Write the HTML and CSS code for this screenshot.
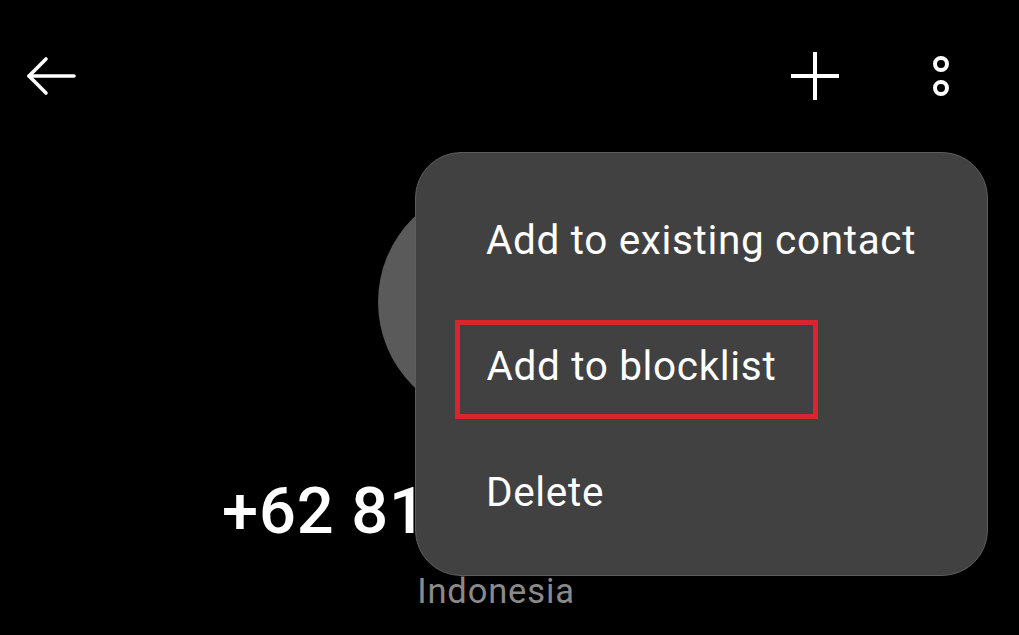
FILE: index.html
```html
<!DOCTYPE html>
<html lang="en">
<head>
<meta charset="utf-8">
<title>Contact</title>
<link rel="stylesheet" href="styles.css">
</head>
<body>
<div class="screen">
  <header class="topbar">
    <svg class="icon-back" width="50" height="40" viewBox="0 0 50 40" fill="none" stroke="#fff" stroke-width="3.6" stroke-linecap="round" stroke-linejoin="round"><path d="M48 20H3"/><path d="M20 3L3 20l17 17"/></svg>
    <div class="actions">
      <svg class="icon-plus" width="50" height="50" viewBox="0 0 50 50" fill="none" stroke="#fff" stroke-width="4"><path d="M1 25h48"/><path d="M25 1v48"/></svg>
      <svg class="icon-more" width="18" height="40" viewBox="0 0 18 40" fill="none" stroke="#fff" stroke-width="4"><circle cx="9" cy="8" r="6"/><circle cx="9" cy="32" r="6"/></svg>
    </div>
  </header>
  <main class="profile">
    <div class="avatar"></div>
    <div class="phone">+62 81</div>
    <div class="country">Indonesia</div>
  </main>
  <ul class="menu">
    <li class="menu-item">Add to existing contact</li>
    <li class="menu-item"><span class="highlight">Add to blocklist</span></li>
    <li class="menu-item">Delete</li>
  </ul>
</div>
</body>
</html>
```
FILE: styles.css
```css
* { box-sizing: border-box; }
html, body { margin: 0; height: 100%; background: #000; }
.screen {
  position: relative;
  width: 1019px;
  height: 635px;
  overflow: hidden;
  background: #000;
  font-family: Roboto, "Liberation Sans", sans-serif;
  color: #fff;
}
.topbar {
  display: flex;
  justify-content: space-between;
  align-items: center;
  height: 50px;
  margin-top: 51px;
  padding: 0 69px 0 26px;
}
.actions { display: flex; align-items: center; gap: 92px; }
.icon-back, .icon-plus, .icon-more { display: block; }
.profile {
  display: flex;
  flex-direction: column;
  align-items: center;
  width: 548px;
  margin-left: 222px;
  padding-top: 83px;
}
.avatar {
  flex: none;
  width: 236px;
  height: 236px;
  border-radius: 50%;
  background: #5a5a5a;
}
.phone {
  align-self: flex-start;
  margin-top: 55px;
  font-size: 65px;
  line-height: 72px;
  font-weight: 500;
  letter-spacing: 0.8px;
}
.country {
  margin-top: 24px;
  font-size: 34.5px;
  line-height: 40px;
  color: #8a8a8a;
  letter-spacing: 0.85px;
}
.menu {
  position: absolute;
  left: 415px;
  top: 152px;
  width: 573px;
  height: 424px;
  margin: 0;
  padding: 24px 0 0 70px;
  list-style: none;
  background: #414141;
  border: 1.5px solid #5c5c5c;
  border-radius: 46px;
}
.menu-item {
  height: 126px;
  display: flex;
  align-items: center;
  font-size: 40.5px;
  letter-spacing: 0.65px;
  color: #fff;
}
.highlight {
  display: flex;
  align-items: center;
  width: 363px;
  height: 99px;
  margin-top: 6px;
  margin-left: -31px;
  padding-left: 26.5px;
  padding-bottom: 6px;
  border: 5px solid #dc2430;
}
```
